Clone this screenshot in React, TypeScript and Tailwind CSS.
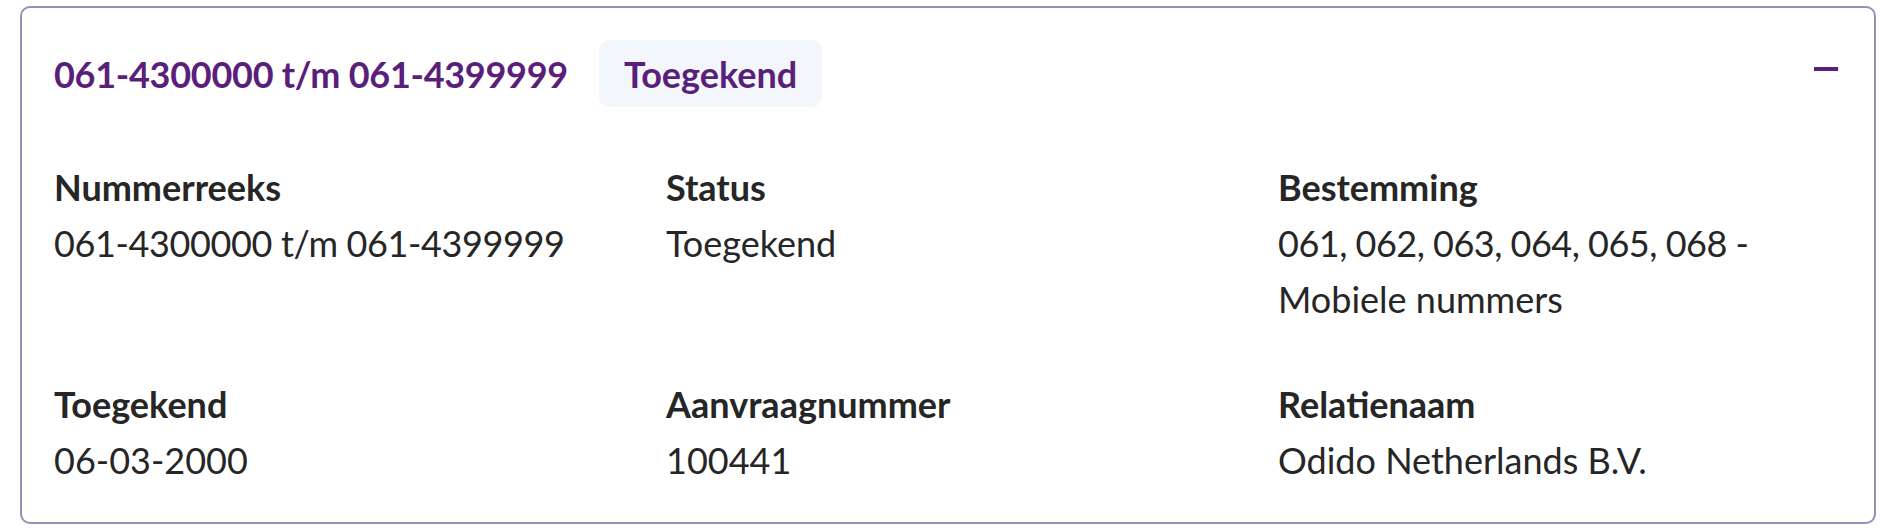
import React from "react";

type Field = { label: string; value: string[]; tight?: string };

const fields: Field[][] = [
  [
    { label: "Nummerreeks", value: ["061-4300000 t/m 061-4399999"], tight: "tracking-[-0.37px]" },
    { label: "Status", value: ["Toegekend"] },
    {
      label: "Bestemming",
      value: ["061, 062, 063, 064, 065, 068 -", "Mobiele nummers"],
      tight: "tracking-[-0.5px]",
    },
  ],
  [
    { label: "Toegekend", value: ["06-03-2000"] },
    { label: "Aanvraagnummer", value: ["100441"] },
    { label: "Relatienaam", value: ["Odido Netherlands B.V."] },
  ],
];

export default function App() {
  return (
    <div
      className="w-[1890px] h-[532px] bg-white pl-[20px] pr-[14px] pt-[6px]"
      style={{ fontFamily: "Lato, 'Open Sans', sans-serif" }}
    >
      <div className="rounded-[10px] border-2 border-[#9491b4] bg-white p-[32px] h-[518px]">
        <div className="flex items-center justify-between h-[67px]">
          <div className="flex items-center gap-[31px]">
            <h2 className="text-[36px] leading-[56px] font-bold text-[#5a1f7a] tracking-[-0.27px]">
              061-4300000 t/m 061-4399999
            </h2>
            <span className="flex items-center h-[67px] px-[25px] rounded-[10px] bg-[#f3f6fa] text-[36px] leading-[56px] font-bold text-[#5a1f7a]">
              Toegekend
            </span>
          </div>
          <button className="w-[32px] h-[32px] flex items-center justify-center -mt-[9px]" aria-label="Inklappen">
            <svg width="32" height="32" viewBox="0 0 32 32" fill="none">
              <line x1="4" y1="16" x2="28" y2="16" stroke="#5a1f7a" strokeWidth="4" />
            </svg>
          </button>
        </div>
        <div className="mt-[52px] flex flex-col gap-[49px]">
          {fields.map((row, i) => (
            <div key={i} className="grid grid-cols-3 gap-x-[48px]">
              {row.map((f) => (
                <div key={f.label} className="text-[36px] leading-[56px] text-[#262626]">
                  <div className="font-bold">{f.label}</div>
                  {f.value.map((v, j) => (
                    <div key={v} className={j === 0 ? f.tight : undefined}>
                      {v}
                    </div>
                  ))}
                </div>
              ))}
            </div>
          ))}
        </div>
      </div>
    </div>
  );
}
